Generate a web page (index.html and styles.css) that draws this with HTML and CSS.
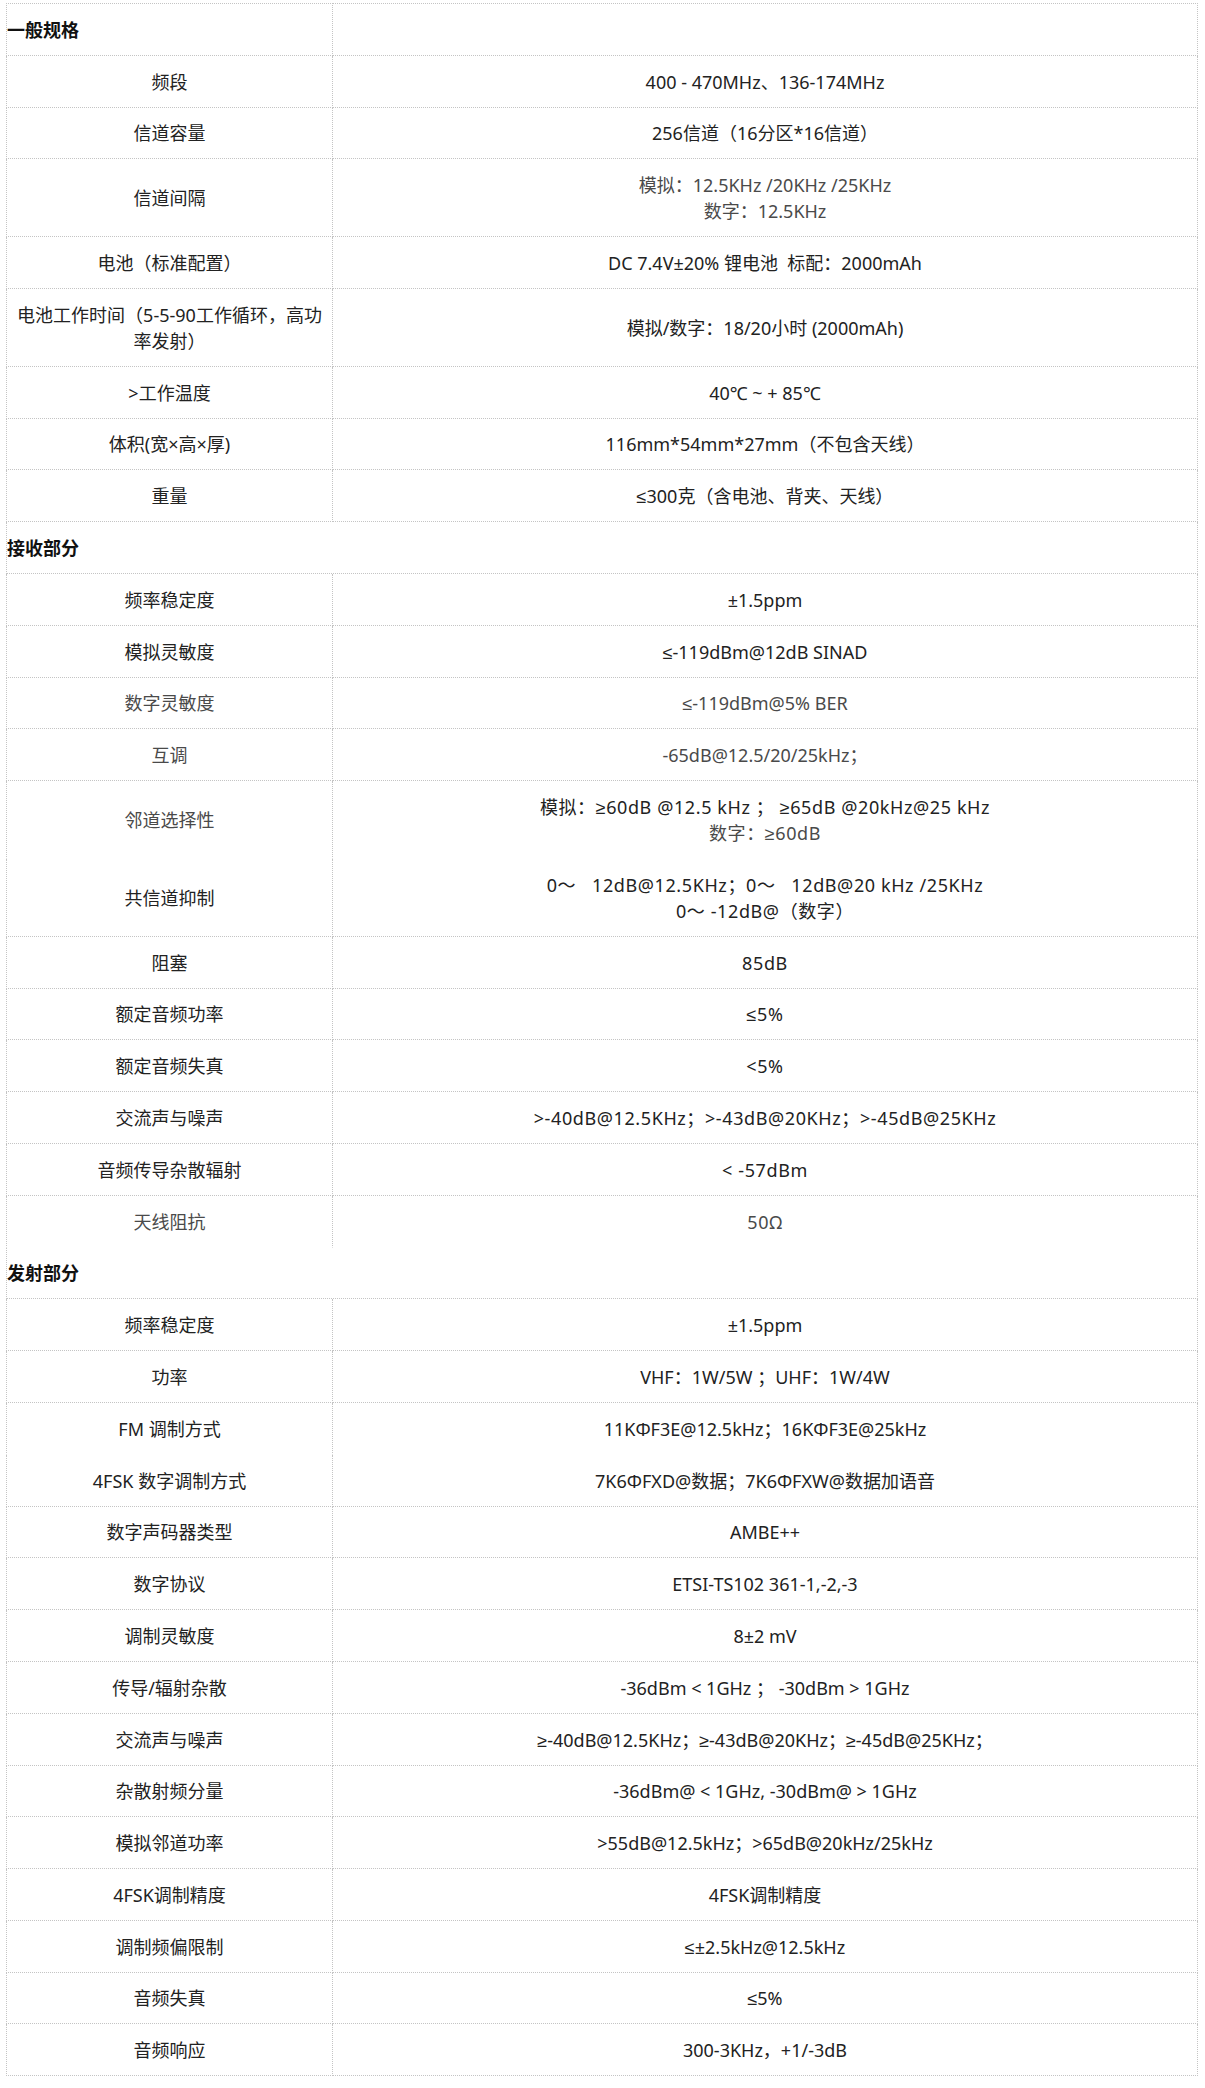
FILE: index.html
```html
<!DOCTYPE html>
<html lang="zh-CN">
<head>
<meta charset="utf-8">
<title>规格参数</title>
<link rel="stylesheet" href="styles.css">
</head>
<body>
<div class="wrap">
<table class="spec">
<colgroup><col class="c1"><col class="c2"></colgroup>
<tbody>
<tr class="sec first"><td class="h">一般规格</td><td class="v"></td></tr>
<tr><td class="k">频段</td><td class="v">400 - 470MHz、136-174MHz</td></tr>
<tr><td class="k">信道容量</td><td class="v">256信道（16分区*16信道）</td></tr>
<tr><td class="k">信道间隔</td><td class="v g">模拟：12.5KHz /20KHz /25KHz<br>数字：12.5KHz</td></tr>
<tr><td class="k">电池（标准配置）</td><td class="v">DC 7.4V±20% 锂电池&nbsp; 标配：2000mAh</td></tr>
<tr><td class="k">电池工作时间（5-5-90工作循环，高功率发射）</td><td class="v">模拟/数字：18/20小时 (2000mAh)</td></tr>
<tr><td class="k">&gt;工作温度</td><td class="v">40℃ ~ + 85℃</td></tr>
<tr><td class="k">体积(宽×高×厚)</td><td class="v">116mm*54mm*27mm（不包含天线）</td></tr>
<tr><td class="k">重量</td><td class="v">≤300克（含电池、背夹、天线）</td></tr>
<tr class="sec"><td class="h" colspan="2">接收部分</td></tr>
<tr><td class="k">频率稳定度</td><td class="v">±1.5ppm</td></tr>
<tr><td class="k">模拟灵敏度</td><td class="v">≤-119dBm@12dB SINAD</td></tr>
<tr><td class="k g">数字灵敏度</td><td class="v g">≤-119dBm@5% BER</td></tr>
<tr><td class="k g">互调</td><td class="v g">-65dB@12.5/20/25kHz；</td></tr>
<tr class="nb"><td class="k g">邻道选择性</td><td class="v wide">模拟：≥60dB @12.5 kHz ； ≥65dB @20kHz@25 kHz<br><span class="g">数字：≥60dB</span></td></tr>
<tr><td class="k">共信道抑制</td><td class="v wide">0～&nbsp;&nbsp; 12dB@12.5KHz；0～&nbsp;&nbsp; 12dB@20 kHz /25KHz<br>0～ -12dB@（数字）</td></tr>
<tr><td class="k">阻塞</td><td class="v wide">85dB</td></tr>
<tr><td class="k">额定音频功率</td><td class="v wide">≤5%</td></tr>
<tr><td class="k">额定音频失真</td><td class="v wide">&lt;5%</td></tr>
<tr><td class="k">交流声与噪声</td><td class="v wide">&gt;-40dB@12.5KHz；&gt;-43dB@20KHz；&gt;-45dB@25KHz</td></tr>
<tr><td class="k">音频传导杂散辐射</td><td class="v wide">&lt; -57dBm</td></tr>
<tr class="nb end"><td class="k g">天线阻抗</td><td class="v wide g">50Ω</td></tr>
<tr class="sec open"><td class="h" colspan="2">发射部分</td></tr>
<tr><td class="k">频率稳定度</td><td class="v">±1.5ppm</td></tr>
<tr><td class="k">功率</td><td class="v">VHF：1W/5W ；UHF：1W/4W</td></tr>
<tr class="nb"><td class="k">FM 调制方式</td><td class="v">11KΦF3E@12.5kHz；16KΦF3E@25kHz</td></tr>
<tr><td class="k">4FSK 数字调制方式</td><td class="v">7K6ΦFXD@数据；7K6ΦFXW@数据加语音</td></tr>
<tr><td class="k">数字声码器类型</td><td class="v">AMBE++</td></tr>
<tr><td class="k">数字协议</td><td class="v">ETSI-TS102 361-1,-2,-3</td></tr>
<tr><td class="k">调制灵敏度</td><td class="v">8±2 mV</td></tr>
<tr><td class="k">传导/辐射杂散</td><td class="v">-36dBm &lt; 1GHz ； -30dBm &gt; 1GHz</td></tr>
<tr><td class="k">交流声与噪声</td><td class="v">≥-40dB@12.5KHz；≥-43dB@20KHz；≥-45dB@25KHz；</td></tr>
<tr><td class="k">杂散射频分量</td><td class="v">-36dBm@ &lt; 1GHz, -30dBm@ &gt; 1GHz</td></tr>
<tr><td class="k">模拟邻道功率</td><td class="v">&gt;55dB@12.5kHz；&gt;65dB@20kHz/25kHz</td></tr>
<tr><td class="k">4FSK调制精度</td><td class="v">4FSK调制精度</td></tr>
<tr><td class="k">调制频偏限制</td><td class="v">≤±2.5kHz@12.5kHz</td></tr>
<tr><td class="k">音频失真</td><td class="v">≤5%</td></tr>
<tr><td class="k">音频响应</td><td class="v">300-3KHz，+1/-3dB</td></tr>
</tbody>
</table>
</div>
</body>
</html>
```

FILE: styles.css
```css
html, body {
  margin: 0;
  padding: 0;
  background: #ffffff;
}

.wrap {
  padding: 3px 0 0 6px;
}

.spec {
  width: 1192px;
  border-spacing: 0;
  border-collapse: separate;
  table-layout: fixed;
  font-family: "Noto Sans", "Liberation Sans", "Noto Sans CJK SC", sans-serif;
  font-size: 18px;
  line-height: 26px;
  color: #222222;
}

.spec col.c1 {
  width: 327px;
}

.spec col.c2 {
  width: 865px;
}

.spec td {
  box-sizing: border-box;
  padding: 12.8px 8px 12px;
  text-align: center;
  vertical-align: middle;
  border-bottom: 1px dotted #c4c4c4;
  border-right: 1px dotted #c4c4c4;
}

.spec td:first-child {
  border-left: 1px dotted #c4c4c4;
}

.spec tr.first td {
  border-top: 1px dotted #c4c4c4;
}

.spec td.h {
  text-align: left;
  padding-left: 0;
  font-weight: 700;
  color: #111111;
}

.spec .g {
  color: #4a4a4a;
}

.spec .wide {
  letter-spacing: 0.6px;
}

.spec tr.nb td {
  border-bottom-color: transparent;
}
```
